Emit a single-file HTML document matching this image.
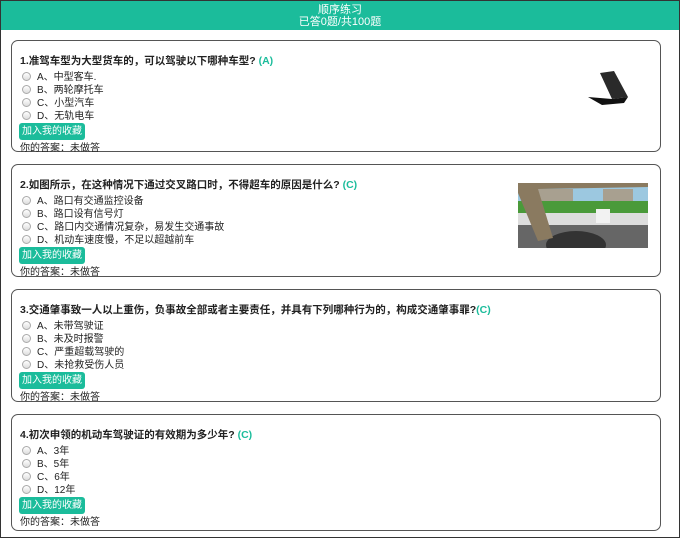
<!DOCTYPE html>
<html><head><meta charset="utf-8"><style>
*{margin:0;padding:0;box-sizing:border-box}
html,body{width:680px;height:538px;overflow:hidden;background:#fff;font-family:"Liberation Sans","Noto Sans CJK SC",sans-serif;color:#222}
.frame{position:absolute;left:0;top:0;width:680px;height:538px;border:1px solid #333}
.hd{position:absolute;left:1px;top:1px;width:678px;height:29px;background:#1bbc9b;color:#fff;text-align:center;font-size:11px;line-height:12px;padding-top:3px}
.card{position:absolute;left:11px;width:650px;border:1px solid #555;border-radius:7px;font-size:10px}
.q{position:absolute;left:8px;top:12px;font-weight:bold;font-size:10.5px}
.q span{color:#1bbc9b}
.opt{position:absolute;left:10px;height:13px;line-height:13px}
.r{display:inline-block;width:9px;height:9px;border:1px solid #aaa;border-radius:50%;background:linear-gradient(#fff,#ddd);vertical-align:-1px;margin-right:6px}
.btn{position:absolute;left:7px;background:#1bbc9b;color:#fff;border-radius:3px;padding:0 3px;height:17px;line-height:17px;font-size:10px}
.ans{position:absolute;left:8px;line-height:14px}
</style></head><body>
<div class="frame"></div>
<div class="hd">顺序练习<br>已答0题/共100题</div>

<div class="card" style="top:40px;height:112px">
<div class="q">1.准驾车型为大型货车的，可以驾驶以下哪种车型? <span>(A)</span></div>
<div class="opt" style="top:30px"><i class="r"></i>A、中型客车.</div>
<div class="opt" style="top:43px"><i class="r"></i>B、两轮摩托车</div>
<div class="opt" style="top:56px"><i class="r"></i>C、小型汽车</div>
<div class="opt" style="top:69px"><i class="r"></i>D、无轨电车</div>
<div class="btn" style="top:82px">加入我的收藏</div>
<div class="ans" style="top:101px">你的答案：未做答</div>
<svg style="position:absolute;left:574px;top:26px" width="46" height="40"><polygon points="14,6 28,4 42,30 26,32" fill="#2a2a2a"/><polygon points="2,30 26,32 42,30 38,36 16,38" fill="#111"/></svg>
</div>

<div class="card" style="top:164px;height:113px">
<div class="q">2.如图所示，在这种情况下通过交叉路口时，不得超车的原因是什么? <span>(C)</span></div>
<div class="opt" style="top:30px"><i class="r"></i>A、路口有交通监控设备</div>
<div class="opt" style="top:43px"><i class="r"></i>B、路口设有信号灯</div>
<div class="opt" style="top:56px"><i class="r"></i>C、路口内交通情况复杂，易发生交通事故</div>
<div class="opt" style="top:69px"><i class="r"></i>D、机动车速度慢，不足以超越前车</div>
<div class="btn" style="top:82px">加入我的收藏</div>
<div class="ans" style="top:101px">你的答案：未做答</div>
<svg style="position:absolute;left:506px;top:18px" width="130" height="65"><rect width="130" height="65" fill="#9cc8e0"/><rect x="20" y="6" width="35" height="22" fill="#a8a090"/><rect x="85" y="6" width="30" height="22" fill="#a8a090"/><rect y="18" width="130" height="12" fill="#4a9a3a"/><rect y="30" width="130" height="12" fill="#ddd"/><rect x="78" y="26" width="14" height="14" fill="#f2f2f2"/><rect y="42" width="130" height="23" fill="#666"/><ellipse cx="58" cy="62" rx="30" ry="14" fill="#333"/><polygon points="0,0 130,0 130,4 20,6 35,55 20,58 0,10" fill="#8a7a60"/></svg>
</div>

<div class="card" style="top:289px;height:113px">
<div class="q">3.交通肇事致一人以上重伤，负事故全部或者主要责任，并具有下列哪种行为的，构成交通肇事罪?<span>(C)</span></div>
<div class="opt" style="top:30px"><i class="r"></i>A、未带驾驶证</div>
<div class="opt" style="top:43px"><i class="r"></i>B、未及时报警</div>
<div class="opt" style="top:56px"><i class="r"></i>C、严重超载驾驶的</div>
<div class="opt" style="top:69px"><i class="r"></i>D、未抢救受伤人员</div>
<div class="btn" style="top:82px">加入我的收藏</div>
<div class="ans" style="top:101px">你的答案：未做答</div>
</div>

<div class="card" style="top:414px;height:117px">
<div class="q">4.初次申领的机动车驾驶证的有效期为多少年? <span>(C)</span></div>
<div class="opt" style="top:30px"><i class="r"></i>A、3年</div>
<div class="opt" style="top:43px"><i class="r"></i>B、5年</div>
<div class="opt" style="top:56px"><i class="r"></i>C、6年</div>
<div class="opt" style="top:69px"><i class="r"></i>D、12年</div>
<div class="btn" style="top:82px">加入我的收藏</div>
<div class="ans" style="top:101px">你的答案：未做答</div>
</div>
</body></html>
